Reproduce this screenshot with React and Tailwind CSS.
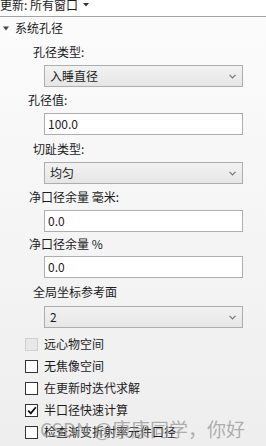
const font = { fontFamily: '"Microsoft YaHei", "Noto Sans CJK SC", "Noto Sans", sans-serif' };

function Chevron() {
  return (
    <svg width="7" height="5" viewBox="0 0 7 5" className="shrink-0">
      <path d="M0.5 0.8 L3.5 3.8 L6.5 0.8" fill="none" stroke="#777" strokeWidth="1.2" />
    </svg>
  );
}

function Select({ value }) {
  return (
    <div className="ml-[44px] w-[199px] h-[22px] border border-[#adadad] bg-gradient-to-b from-[#f2f2f2] to-[#e6e6e6] flex items-center justify-between pl-[5px] pr-[6px] text-[12px] text-[#1b1b1b]">
      <span>{value}</span>
      <Chevron />
    </div>
  );
}

function Input({ value }) {
  return (
    <div className="ml-[44px] w-[199px] h-[22px] border border-[#adadad] bg-white flex items-center pl-[3px] text-[12px] text-[#1b1b1b]">
      {value}
    </div>
  );
}

function Label({ children, pl, h = "h-[26px]" }) {
  return (
    <div className={`${h} flex items-center text-[12px] text-[#1b1b1b] ${pl}`}>{children}</div>
  );
}

function Check({ label, checked, disabled }) {
  return (
    <div className="h-[22px] flex items-center pl-[25px] gap-[6px] text-[12px] text-[#1b1b1b]">
      <div
        className={`w-[13px] h-[13px] border flex items-center justify-center ${
          disabled ? "border-[#cfcfcf] bg-[#e8e8e8]" : "border-[#333] bg-white"
        }`}
      >
        {checked && (
          <svg width="10" height="9" viewBox="0 0 10 9">
            <path d="M1.2 4.6 L3.8 7.4 L8.8 1.2" fill="none" stroke="#111" strokeWidth="1.8" />
          </svg>
        )}
      </div>
      <span>{label}</span>
    </div>
  );
}

export default function App() {
  return (
    <div className="w-[266px] h-[446px] overflow-hidden relative bg-gradient-to-b from-[#fcfcfc] to-[#eeeeee]" style={font}>
      <div className="h-[17px] bg-white border-b border-[#a4a4a4] overflow-hidden">
        <div className="flex items-center gap-[5px] text-[12px] leading-[12px] -mt-[1px] text-[#1b1b1b]">
          <span>更新: 所有窗口</span>
          <svg width="6" height="4" viewBox="0 0 6 4">
            <path d="M0 0 H6 L3 3.5 Z" fill="#333" />
          </svg>
        </div>
      </div>

      <div className="h-[22px] flex items-center pl-[3px] gap-[6px] text-[12px] text-[#1b1b1b]">
        <svg width="6" height="5" viewBox="0 0 6 5">
          <path d="M0 0.5 H6 L3 4.5 Z" fill="#444" />
        </svg>
        <span>系统孔径</span>
      </div>

      <Label pl="pl-[33px]">孔径类型:</Label>
      <Select value="入睡直径" />
      <Label pl="pl-[28px]">孔径值:</Label>
      <Input value="100.0" />
      <Label pl="pl-[33px]" h="h-[27px]">切趾类型:</Label>
      <Select value="均匀" />
      <Label pl="pl-[29px]">净口径余量 毫米:</Label>
      <Input value="0.0" />
      <Label pl="pl-[29px]" h="h-[24px]">净口径余量 %</Label>
      <Input value="0.0" />
      <Label pl="pl-[33px]" h="h-[28px]">全局坐标参考面</Label>
      <Select value="2" />

      <div className="h-[5px]" />
      <Check label="远心物空间" disabled />
      <Check label="无焦像空间" />
      <Check label="在更新时迭代求解" />
      <Check label="半口径快速计算" checked />
      <Check label="检查渐变折射率元件口径" />

      <div className="absolute left-[40px] top-[418px] text-[19px] leading-[22px] text-[#909090]/70 whitespace-nowrap pointer-events-none">
        CSDN @康康同学，你好
      </div>
    </div>
  );
}
